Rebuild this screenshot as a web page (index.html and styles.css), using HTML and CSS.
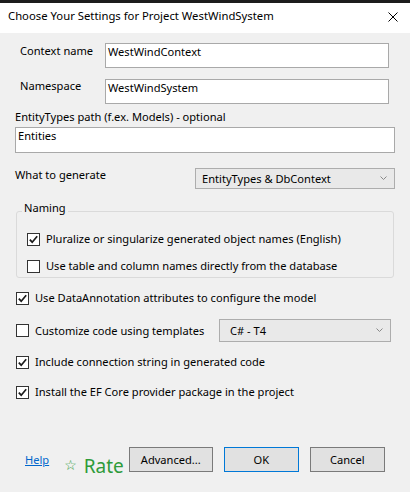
FILE: index.html
```html
<!DOCTYPE html>
<html>
<head>
<meta charset="utf-8">
<link rel="stylesheet" href="styles.css">
</head>
<body>
<div class="window">
  <div class="titlebar">
    <span class="title">Choose Your Settings for Project WestWindSystem</span>
    <svg class="close" width="10" height="10" viewBox="0 0 10 10"><path d="M0.5 0.5 L9.5 9.5 M9.5 0.5 L0.5 9.5" stroke="#000" stroke-width="1" fill="none"/></svg>
  </div>
  <div class="content">
    <div class="field-row row-context">
      <span class="field-label">Context name</span>
      <div class="textbox tb-short">WestWindContext</div>
    </div>
    <div class="field-row row-namespace">
      <span class="field-label nudge">Namespace</span>
      <div class="textbox tb-short">WestWindSystem</div>
    </div>
    <div class="path-label">EntityTypes path (f.ex. Models) - optional</div>
    <div class="textbox tb-wide">Entities</div>
    <div class="gen-row">
      <span class="gen-label">What to generate</span>
      <div class="combo combo-gen">
        <span>EntityTypes &amp; DbContext</span>
        <svg class="chev" width="7" height="4" viewBox="0 0 7 4"><path d="M0.5 0.5 L3.5 3.5 L6.5 0.5" stroke="#888" stroke-width="1" fill="none"/></svg>
      </div>
    </div>
    <fieldset class="group">
      <legend>Naming</legend>
      <div class="check-row in-group first">
        <span class="cb checked"><svg width="11" height="11" viewBox="0 0 11 11"><path d="M1.8 5.6 L4.2 8.2 L9.2 2.2" stroke="#1a1a1a" stroke-width="1.7" fill="none"/></svg></span>
        <span>Pluralize or singularize generated object names (English)</span>
      </div>
      <div class="check-row in-group second">
        <span class="cb"></span>
        <span>Use table and column names directly from the database</span>
      </div>
    </fieldset>
    <div class="check-row outer r1">
      <span class="cb checked"><svg width="11" height="11" viewBox="0 0 11 11"><path d="M1.8 5.6 L4.2 8.2 L9.2 2.2" stroke="#1a1a1a" stroke-width="1.7" fill="none"/></svg></span>
      <span>Use DataAnnotation attributes to configure the model</span>
    </div>
    <div class="check-row outer r2">
      <span class="cb"></span>
      <span class="tpl-label">Customize code using templates</span>
      <div class="combo combo-tpl">
        <span>C# - T4</span>
        <svg class="chev" width="7" height="4" viewBox="0 0 7 4"><path d="M0.5 0.5 L3.5 3.5 L6.5 0.5" stroke="#888" stroke-width="1" fill="none"/></svg>
      </div>
    </div>
    <div class="check-row outer r3">
      <span class="cb checked"><svg width="11" height="11" viewBox="0 0 11 11"><path d="M1.8 5.6 L4.2 8.2 L9.2 2.2" stroke="#1a1a1a" stroke-width="1.7" fill="none"/></svg></span>
      <span>Include connection string in generated code</span>
    </div>
    <div class="check-row outer r4">
      <span class="cb checked"><svg width="11" height="11" viewBox="0 0 11 11"><path d="M1.8 5.6 L4.2 8.2 L9.2 2.2" stroke="#1a1a1a" stroke-width="1.7" fill="none"/></svg></span>
      <span>Install the EF Core provider package in the project</span>
    </div>
    <div class="bottom-row">
      <a class="help">Help</a>
      <span class="star">☆</span>
      <span class="rate">Rate</span>
      <button class="btn btn-adv">Advanced...</button>
      <button class="btn btn-ok">OK</button>
      <button class="btn btn-cancel">Cancel</button>
    </div>
  </div>
</div>
</body>
</html>
```

FILE: styles.css
```css
html, body {
  margin: 0;
  padding: 0;
}
body {
  width: 410px;
  height: 492px;
  overflow: hidden;
  background: #f0f0f0;
  font-family: "Noto Sans", "Open Sans", sans-serif;
  font-size: 11.1px;
  line-height: 16px;
  color: #000;
}
.window {
  border-top: 3px solid #1c1c1c;
  height: 489px;
}
.titlebar {
  height: 30px;
  background: #fff;
  display: flex;
  align-items: flex-start;
  justify-content: space-between;
  padding: 5px 0 0 8px;
  box-sizing: border-box;
}
.title {
  font-size: 11.3px;
}
.close {
  margin: 4px 12px 0 0;
}
.content {
  display: flex;
  flex-direction: column;
}
.field-row {
  display: flex;
  align-items: flex-start;
  padding-left: 20px;
}
.row-context {
  margin-top: 10px;
}
.row-namespace {
  margin-top: 11px;
}
.field-label {
  width: 85px;
}
.nudge {
  margin-top: -1px;
}
.textbox {
  box-sizing: border-box;
  background: #fff;
  border: 1px solid #a9a9a9;
  padding: 0 2px;
  white-space: nowrap;
}
.tb-short {
  width: 284px;
  height: 25px;
}
.path-label {
  margin: 5px 0 0 15px;
}
.tb-wide {
  margin: 2px 0 0 15px;
  width: 380px;
  height: 26px;
}
.gen-row {
  display: flex;
  align-items: flex-start;
  margin: 14px 0 0 15px;
}
.gen-label {
  width: 180px;
}
.combo {
  box-sizing: border-box;
  background: #e9e9e9;
  border: 1px solid #adadad;
  display: flex;
  align-items: center;
  justify-content: space-between;
  padding: 0 7px 0 6px;
}
.combo-gen {
  width: 200px;
  height: 21px;
  margin-top: 1px;
}
.tpl-label {
  width: 184px;
  flex-shrink: 0;
}
.combo-tpl {
  width: 172px;
  height: 23px;
  padding-left: 10px;
}
.chev {
  margin-top: -2px;
}
.group {
  margin: 11px 0 0 16px;
  width: 378px;
  box-sizing: border-box;
  border: 1px solid #dadada;
  border-radius: 3px;
  padding: 0 0 3px 0;
  min-width: 0;
}
.group legend {
  margin-left: 5px;
  padding: 0 2px 6px 2px;
  line-height: 16px;
}
.check-row {
  display: flex;
  align-items: flex-start;
}
.cb {
  box-sizing: border-box;
  width: 13px;
  height: 13px;
  background: #fff;
  border: 1px solid #333;
  margin-top: 2px;
  display: flex;
  align-items: center;
  justify-content: center;
  flex-shrink: 0;
}
.check-row .cb {
  margin-right: 6px;
}
.in-group {
  padding-left: 10px;
}
.in-group.first {
  margin-top: 9px;
}
.in-group.second {
  margin-top: 11px;
}
.outer {
  padding-left: 16px;
}
.r1 {
  margin-top: 12px;
}
.r2 {
  margin-top: 13px;
  align-items: center;
}
.r2 .cb {
  margin-top: 0;
}
.r3 {
  margin-top: 12px;
}
.r4 {
  margin-top: 14px;
}
.bottom-row {
  display: flex;
  align-items: flex-start;
  margin-top: 47px;
  padding-left: 25px;
}
.help {
  color: #0066cc;
  text-decoration: underline;
  margin-top: 5px;
}
.star {
  color: #2e9b3a;
  font-size: 14px;
  line-height: 16px;
  margin: 10px 0 0 15px;
  font-family: "DejaVu Sans", sans-serif;
}
.rate {
  color: #2e9b3a;
  font-size: 19px;
  line-height: 24px;
  margin: 7px 0 0 7px;
}
.btn {
  box-sizing: border-box;
  height: 25px;
  background: #e1e1e1;
  border: 1px solid #7a7a7a;
  font-family: "Noto Sans", "Open Sans", sans-serif;
  font-size: 11.1px;
  line-height: 16px;
  color: #000;
  padding: 0;
}
.btn-adv {
  width: 84px;
  margin-left: 5px;
}
.btn-ok {
  width: 75px;
  margin-left: 11px;
  border-color: #0078d7;
}
.btn-cancel {
  width: 75px;
  margin-left: 11px;
}
```
